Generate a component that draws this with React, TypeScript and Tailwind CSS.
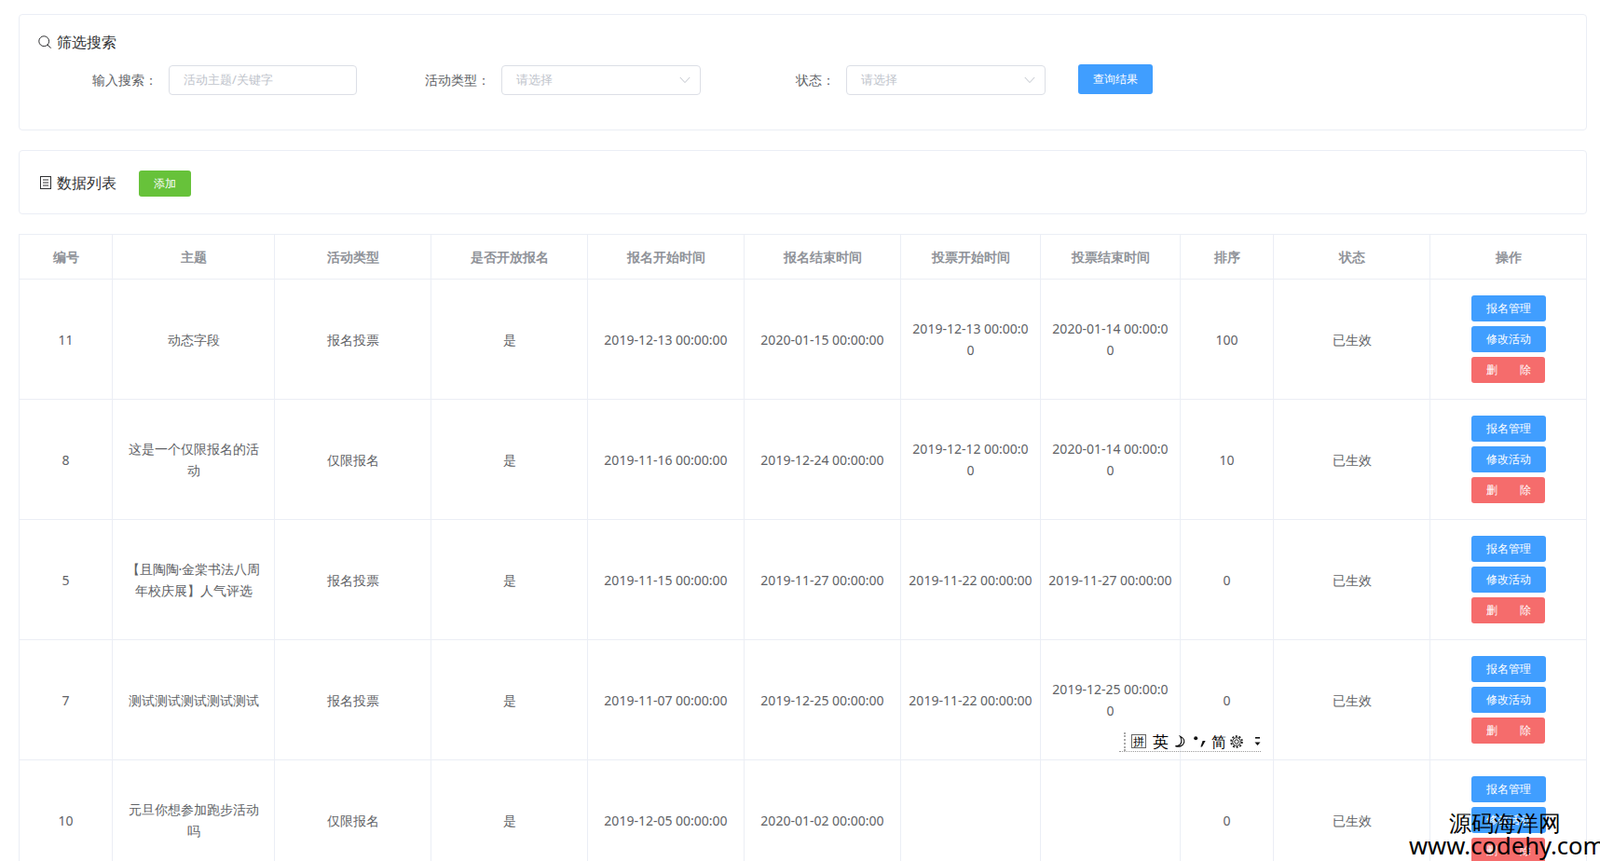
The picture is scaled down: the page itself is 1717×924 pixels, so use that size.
import React from "react";

const FONT = "font-['Liberation_Sans','Noto_Sans_CJK_SC',sans-serif]";

const SearchIcon = () => (
  <svg width="14" height="14" viewBox="0 0 14 14" fill="none" stroke="#303133" strokeWidth="1">
    <circle cx="6.2" cy="6.2" r="5.4" />
    <path d="M10.2 10.2 13.4 13.4" strokeLinecap="round" />
  </svg>
);

const TicketsIcon = () => (
  <svg width="12" height="14" viewBox="0 0 12 14" fill="none" stroke="#303133" strokeWidth="1">
    <rect x="0.5" y="0.5" width="11" height="13" />
    <path d="M3 4h6M3 7h6M3 10h6" />
  </svg>
);

const Chevron = () => (
  <svg width="12" height="8" viewBox="0 0 12 8" fill="none" stroke="#c0c4cc" strokeWidth="1">
    <path d="M0.8 1 6 6.6 11.2 1" />
  </svg>
);

const Label = ({ children }: { children: React.ReactNode }) => (
  <div className="w-[140px] h-8 pr-3 text-right text-[14px] leading-8 text-[#606266] mt-px">{children}</div>
);

const SelectBox = () => (
  <div className="w-[214px] h-8 mt-px flex items-center justify-between border border-[#dcdfe6] rounded pl-[15px] pr-[10px] text-[13px] text-[#c0c4cc]">
    <span>请选择</span>
    <Chevron />
  </div>
);

type Row = {
  id: string;
  title: React.ReactNode;
  type: string;
  signStart: string;
  signEnd: string;
  voteStart: React.ReactNode;
  voteEnd: React.ReactNode;
  sort: string;
};

const wrapA = (
  <>
    2019-12-13 00:00:0
    <br />0
  </>
);
const wrapB = (
  <>
    2020-01-14 00:00:0
    <br />0
  </>
);
const wrapC = (
  <>
    2019-12-12 00:00:0
    <br />0
  </>
);
const wrapD = (
  <>
    2019-12-25 00:00:0
    <br />0
  </>
);

const rows: Row[] = [
  { id: "11", title: "动态字段", type: "报名投票", signStart: "2019-12-13 00:00:00", signEnd: "2020-01-15 00:00:00", voteStart: wrapA, voteEnd: wrapB, sort: "100" },
  { id: "8", title: <>这是一个仅限报名的活<br />动</>, type: "仅限报名", signStart: "2019-11-16 00:00:00", signEnd: "2019-12-24 00:00:00", voteStart: wrapC, voteEnd: wrapB, sort: "10" },
  { id: "5", title: <>【且陶陶·金棠书法八周<br />年校庆展】人气评选</>, type: "报名投票", signStart: "2019-11-15 00:00:00", signEnd: "2019-11-27 00:00:00", voteStart: "2019-11-22 00:00:00", voteEnd: "2019-11-27 00:00:00", sort: "0" },
  { id: "7", title: "测试测试测试测试测试", type: "报名投票", signStart: "2019-11-07 00:00:00", signEnd: "2019-12-25 00:00:00", voteStart: "2019-11-22 00:00:00", voteEnd: wrapD, sort: "0" },
  { id: "10", title: <>元旦你想参加跑步活动<br />吗</>, type: "仅限报名", signStart: "2019-12-05 00:00:00", signEnd: "2020-01-02 00:00:00", voteStart: "", voteEnd: "", sort: "0" },
];

const headers = ["编号", "主题", "活动类型", "是否开放报名", "报名开始时间", "报名结束时间", "投票开始时间", "投票结束时间", "排序", "状态", "操作"];
const widths = ["w-[100px]", "w-[174px]", "w-[168px]", "w-[168px]", "w-[168px]", "w-[168px]", "w-[150px]", "w-[150px]", "w-[100px]", "w-[168px]", "w-[168px]"];

const Cell = ({ children }: { children?: React.ReactNode }) => (
  <td className="h-[129px] p-0 border-r border-b border-[#ebeef5] text-center align-middle text-[14px] leading-[23px] text-[#606266] whitespace-nowrap">
    {children}
  </td>
);

const ActionBtn = ({ color, width, children }: { color: string; width: string; children: React.ReactNode }) => (
  <div className={`${color} ${width} h-7 rounded-[3px] text-white text-[12px] leading-7 text-center whitespace-pre`}>{children}</div>
);

const ImeBar = () => (
  <div className="absolute left-[1201px] top-[785px] w-[152px] h-[22px] border-b border-dotted border-[#9a9a9a] flex items-center text-black text-[16px] leading-none">
    <div className="ml-[5px] h-[20px] border-l-2 border-dotted border-[#aaaaaa]" />
    <span className="ml-[6px] w-[16px] h-[15px] border border-[#666] text-[12px] leading-[13px] text-center">拼</span>
    <span className="ml-[7px] w-[17px] text-[17px]">英</span>
    <svg className="ml-[6px]" width="13" height="14" viewBox="0 0 13 14" fill="none" stroke="#111" strokeWidth="1.2">
      <path d="M6.5 1.2C9.8 2.6 11.4 5.6 10.4 8.4 9.4 11.2 5.6 13.2 1.4 11.6 4.6 11.4 7.8 9.6 7.9 6.2 8 4.2 7.4 2.6 6.5 1.2Z" />
    </svg>
    <svg className="ml-[8px]" width="13" height="12" viewBox="0 0 13 12" fill="#111">
      <circle cx="2.2" cy="2.2" r="2" />
      <path d="M9.6 5h3l-3.6 6.4H7.4Z" />
    </svg>
    <span className="ml-[6px] w-[16px] text-[16px]">简</span>
    <svg className="ml-[4px]" width="14" height="14" viewBox="0 0 14 14" fill="none" stroke="#222" strokeWidth="1">
      <circle cx="7" cy="7" r="2.2" />
      <circle cx="7" cy="7" r="4.3" />
      <circle cx="7" cy="7" r="5.9" strokeDasharray="2 1.7" strokeWidth="1.8" />
    </svg>
    <svg className="ml-[12px]" width="7" height="11" viewBox="0 0 7 11" fill="#111">
      <rect x="1" y="1" width="5" height="1.6" />
      <path d="M0.5 6.5h6l-3 3.6Z" />
    </svg>
  </div>
);

const Watermark = () => (
  <div className="absolute left-[1500px] top-[868px] w-[217px] text-black">
    <div className="pl-[55px] text-[24px] leading-[30px] whitespace-nowrap">源码海洋网</div>
    <div className="pl-[12px] text-[25.6px] leading-[20px] whitespace-nowrap">www.codehy.com</div>
  </div>
);

export default function App() {
  return (
    <div className={`${FONT} relative h-[924px] overflow-hidden bg-white pt-[15px] pl-5`}>
      {/* filter card */}
      <section className="w-[1683px] h-[125px] border border-[#ebeef5] rounded pt-[19px] pl-5">
        <div className="flex items-center h-5 text-[16px] text-[#303133]">
          <SearchIcon />
          <span className="ml-[6px]">筛选搜索</span>
        </div>
        <div className="flex items-start mt-[14px]">
          <Label>输入搜索：</Label>
          <div className="w-[202px] h-8 mt-px flex items-center border border-[#dcdfe6] rounded pl-[15px] text-[13px] text-[#c0c4cc]">
            活动主题/关键字
          </div>
          <div className="w-[15px]" />
          <Label>活动类型：</Label>
          <SelectBox />
          <div className="w-[16px]" />
          <Label>状态：</Label>
          <SelectBox />
          <button className="ml-[35px] w-[80px] h-8 rounded-[3px] bg-[#409eff] text-white text-[12px]">查询结果</button>
        </div>
      </section>

      {/* list header card */}
      <section className="mt-[21px] w-[1683px] h-[69px] border border-[#ebeef5] rounded pl-5 flex items-center">
        <div className="flex items-center text-[16px] text-[#303133]">
          <span className="ml-[2px] flex"><TicketsIcon /></span>
          <span className="ml-[6px]">数据列表</span>
        </div>
        <button className="ml-6 mt-[3px] w-[56px] h-7 rounded-[3px] bg-[#67c23a] text-white text-[12px]">添加</button>
      </section>

      {/* table */}
      <div className="mt-[21px] w-[1683px] border-l border-t border-[#ebeef5]">
        <table className="table-fixed w-[1682px] border-separate border-spacing-0">
          <colgroup>
            {widths.map((w, i) => (
              <col key={i} className={w} />
            ))}
          </colgroup>
          <thead>
            <tr>
              {headers.map((h) => (
                <th key={h} className="h-[48px] p-0 border-r border-b border-[#ebeef5] text-center text-[14px] font-bold text-[#909399]">
                  {h}
                </th>
              ))}
            </tr>
          </thead>
          <tbody>
            {rows.map((r) => (
              <tr key={r.id}>
                <Cell>{r.id}</Cell>
                <Cell>{r.title}</Cell>
                <Cell>{r.type}</Cell>
                <Cell>是</Cell>
                <Cell>{r.signStart}</Cell>
                <Cell>{r.signEnd}</Cell>
                <Cell>{r.voteStart}</Cell>
                <Cell>{r.voteEnd}</Cell>
                <Cell>{r.sort}</Cell>
                <Cell>已生效</Cell>
                <Cell>
                  <div className="flex flex-col items-start gap-[5px] pl-[44px]">
                    <ActionBtn color="bg-[#409eff]" width="w-[80px]">报名管理</ActionBtn>
                    <ActionBtn color="bg-[#409eff]" width="w-[80px]">修改活动</ActionBtn>
                    <ActionBtn color="bg-[#f56c6c]" width="w-[79px]">{"删\u3000\u3000除"}</ActionBtn>
                  </div>
                </Cell>
              </tr>
            ))}
          </tbody>
        </table>
      </div>

      <ImeBar />
      <Watermark />
    </div>
  );
}
